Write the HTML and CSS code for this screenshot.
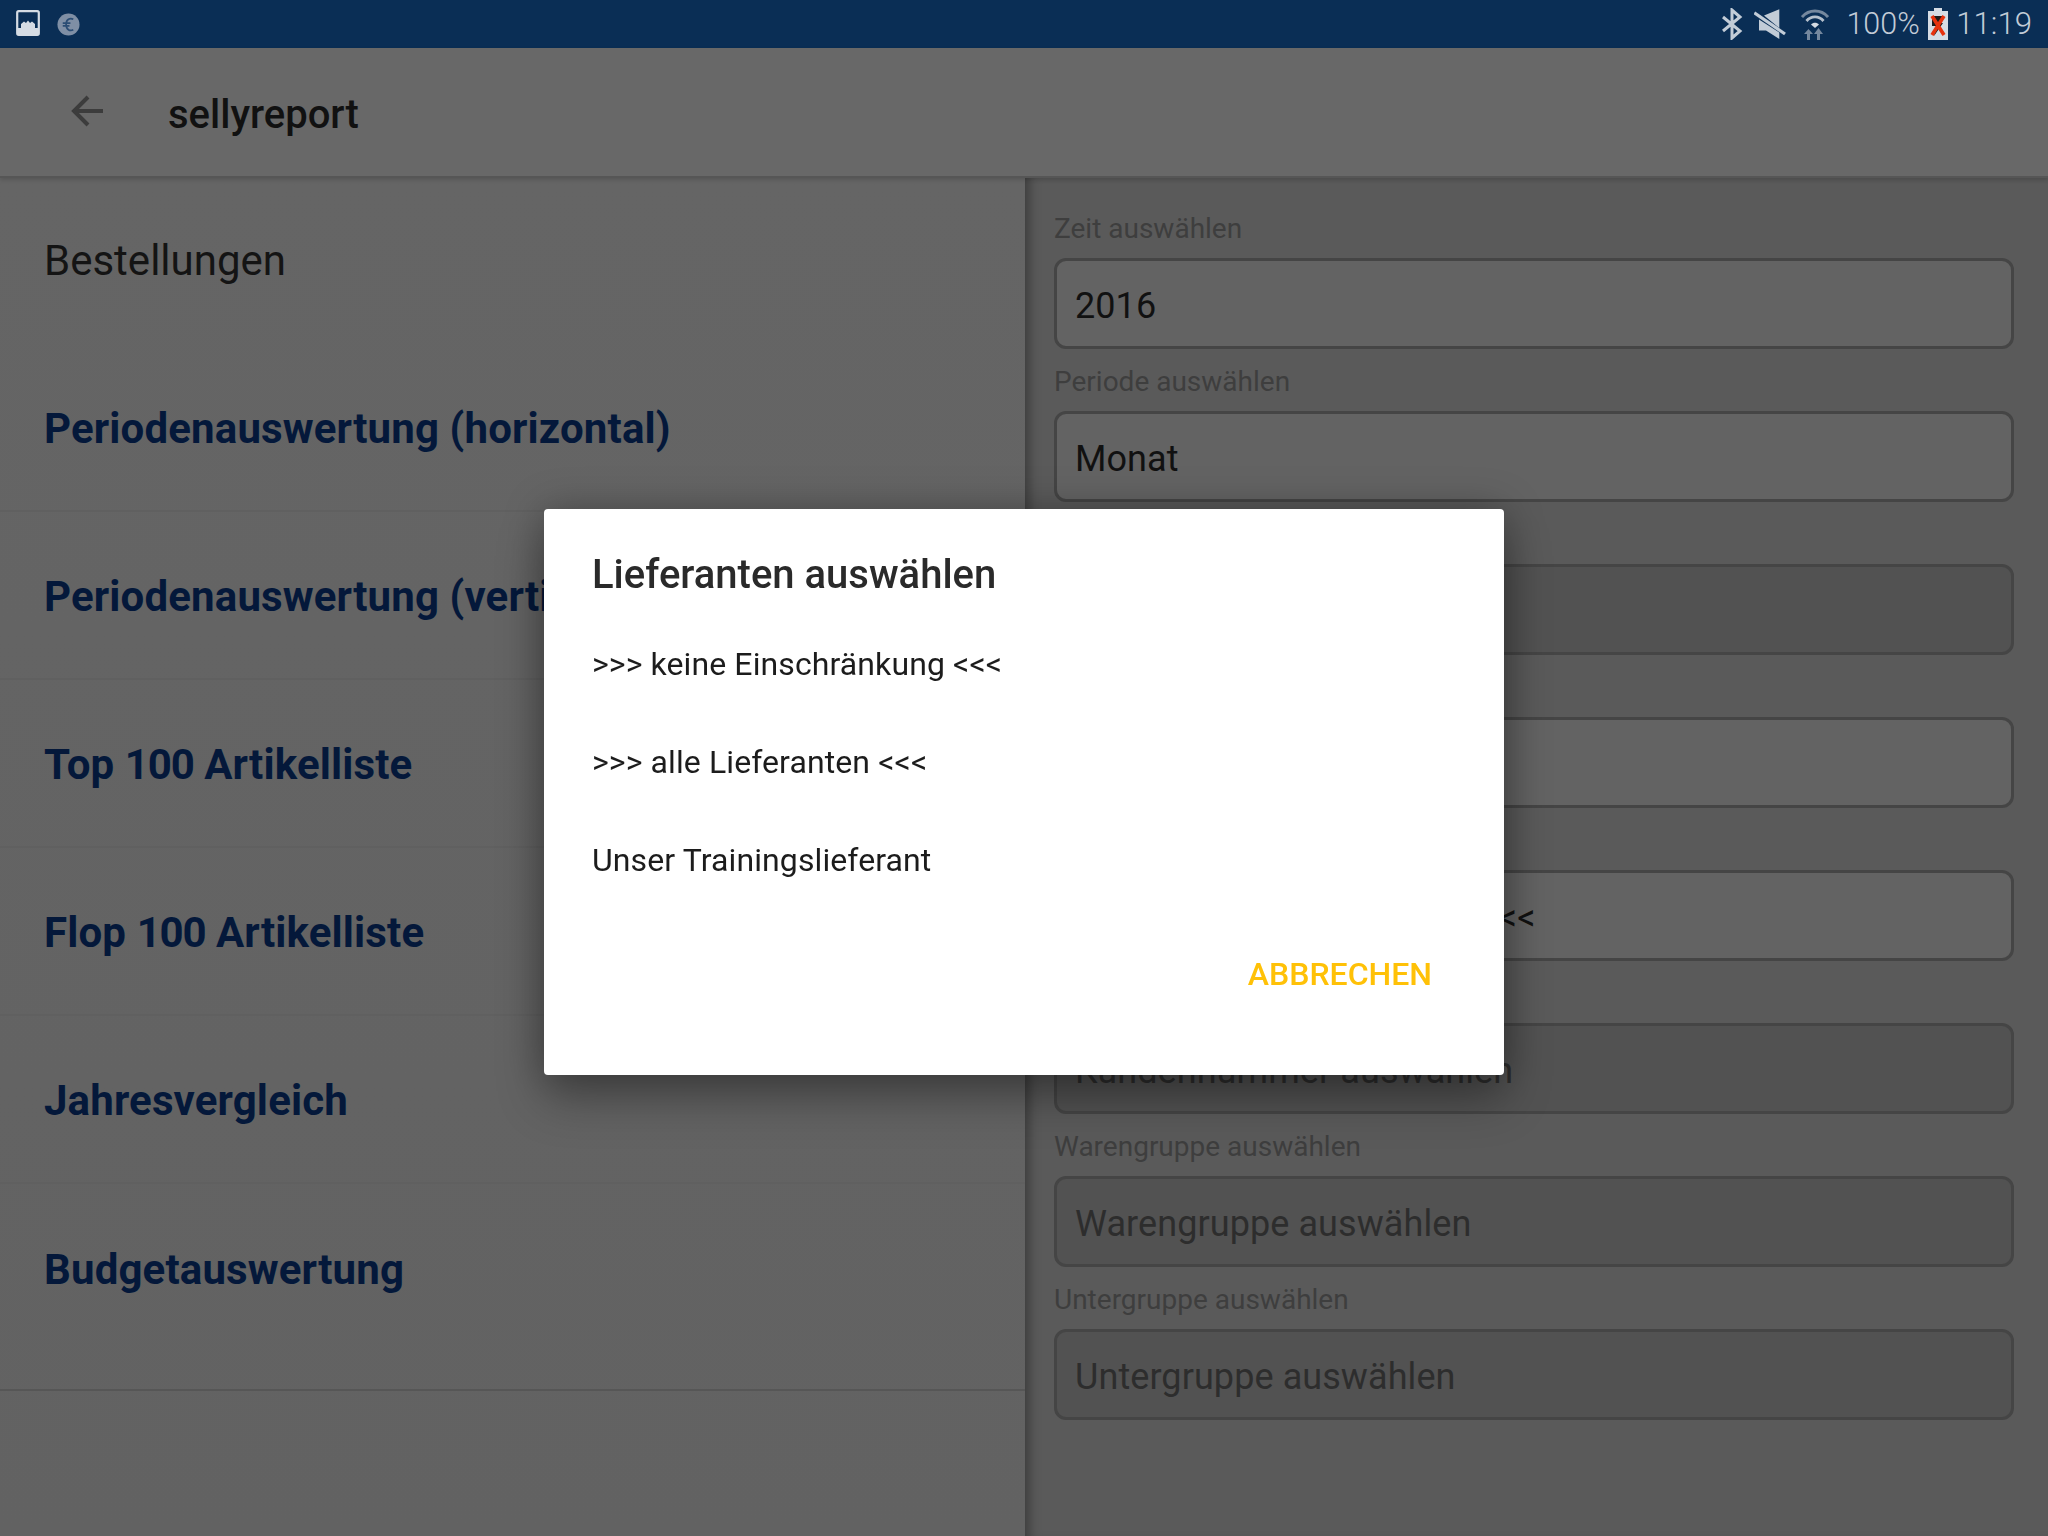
FILE: index.html
```html
<!DOCTYPE html>
<html lang="de">
<head>
<meta charset="utf-8">
<title>sellyreport</title>
<link rel="stylesheet" href="styles.css">
</head>
<body>
<div class="statusbar">
  <div class="status-left">
    <svg class="ic-image" viewBox="0 0 24 26"><rect x="1.200" y="1.200" width="21.600" height="23.600" rx="1.500" fill="#0a2e55" stroke="#d5dce4" stroke-width="2.200"/><path d="M5 18v-4l3-2.500 2 1.500 2-2.500 2 2.500 2-1.500 3 2.500v4z" fill="#d5dce4"/><rect x="1" y="18" width="22" height="7" fill="#d5dce4"/></svg>
    <svg class="ic-euro" viewBox="0 0 24 24"><circle cx="12" cy="12" r="11.500" fill="#7f8fa5"/><path d="M17 6.500c-3.500-1.800-7.500 0-7.500 5.500s4 7.300 7.500 5.500M6 10.500h8M6 13.500h7" fill="none" stroke="#2b4d74" stroke-width="1.800"/></svg>
  </div>
  <div class="status-right">
    <svg class="ic-bt" viewBox="0 0 22 32"><path d="M2 9l17 14-8 7V2l8 7L2 23" fill="none" stroke="#c2ccd7" stroke-width="3"/></svg>
    <svg class="ic-mute" viewBox="0 0 32 30"><path d="M25.300.3V19L10 6.500zM5 10.500v11h7L25.300 30v-6.500z" fill="#c2ccd7"/><path d="M.3 3.700L31 25" stroke="#c2ccd7" stroke-width="3.200"/></svg>
    <svg class="ic-wifi" viewBox="0 0 28 32"><path d="M1 9C8 1 20 1 27 9" fill="none" stroke="#75889e" stroke-width="2.800"/><path d="M5.500 13C10 7.500 18 7.500 22.500 13" fill="none" stroke="#b5c0cc" stroke-width="2.800"/><path d="M10 16.500c2.200-2.500 5.800-2.500 8 0l-4 3.500z" fill="#d5dce4"/><path d="M6 32v-6H3l4.500-5 4.500 5H9v6zM16 32v-6h-3l4.500-6 4.500 6h-3v6z" fill="#75889e"/></svg>
    <span class="status-text pct">100%</span>
    <svg class="ic-batt" viewBox="0 0 20 32"><path d="M6 0h8v3h6v29H0V3h6z" fill="#d5dce4"/><path d="M4 8h12l-4 7h3L6 28l2-10H4z" fill="#1b1b1b"/><path d="M4 8l12 19M16 8L4 27" stroke="#e6320e" stroke-width="3.600"/></svg>
    <span class="status-text time">11:19</span>
  </div>
</div>

<header class="toolbar">
  <svg class="ic-back" viewBox="0 0 32 32"><path d="M32 16H3M17 2L3 16l14 14" fill="none" stroke="#3c3c3c" stroke-width="4"/></svg>
  <span class="app-title">sellyreport</span>
</header>

<main class="content">
  <section class="left">
    <h1 class="section-title">Bestellungen</h1>
    <ul class="report-list">
      <li class="report"><span>Periodenauswertung (horizontal)</span></li>
      <li class="report"><span>Periodenauswertung (vertikal)</span></li>
      <li class="report"><span>Top <span class="num">100</span> Artikelliste</span></li>
      <li class="report"><span>Flop <span class="num">100</span> Artikelliste</span></li>
      <li class="report"><span>Jahresvergleich</span></li>
      <li class="report"><span>Budgetauswertung</span></li>
    </ul>
  </section>
  <section class="right">
    <div class="group"><div class="lbl">Zeit auswählen</div><div class="field filled">2016</div></div>
    <div class="group"><div class="lbl">Periode auswählen</div><div class="field filled">Monat</div></div>
    <div class="group"><div class="lbl"></div><div class="field empty"></div></div>
    <div class="group"><div class="lbl"></div><div class="field filled"></div></div>
    <div class="group"><div class="lbl"></div><div class="field filled">&gt;&gt;&gt; keine Einschränkung &lt;&lt;&lt;</div></div>
    <div class="group"><div class="lbl"></div><div class="field empty">Kundennummer auswählen</div></div>
    <div class="group"><div class="lbl">Warengruppe auswählen</div><div class="field empty">Warengruppe auswählen</div></div>
    <div class="group"><div class="lbl">Untergruppe auswählen</div><div class="field empty">Untergruppe auswählen</div></div>
  </section>
</main>

<div class="overlay">
  <div class="dialog">
    <h2 class="dialog-title">Lieferanten auswählen</h2>
    <ul class="options">
      <li class="option">&gt;&gt;&gt; keine Einschränkung &lt;&lt;&lt;</li>
      <li class="option">&gt;&gt;&gt; alle Lieferanten &lt;&lt;&lt;</li>
      <li class="option">Unser Trainingslieferant</li>
    </ul>
    <div class="actions"><span class="cancel">ABBRECHEN</span></div>
  </div>
</div>
</body>
</html>
```

FILE: styles.css
```css
* { box-sizing: border-box; }
html, body { margin: 0; padding: 0; }
body {
  width: 2048px;
  height: 1536px;
  overflow: hidden;
  background: #666;
  font-family: Roboto, "Liberation Sans", sans-serif;
  display: flex;
  flex-direction: column;
}
ul { list-style: none; margin: 0; padding: 0; }
h1, h2 { margin: 0; }

.statusbar {
  height: 48px;
  flex: none;
  background: #0a2e55;
  display: flex;
  justify-content: space-between;
  align-items: center;
  color: #c2ccd7;
}
.status-left { display: flex; align-items: center; padding-left: 16px; }
.status-right { display: flex; align-items: center; padding-right: 16px; }
.ic-image { width: 24px; height: 26px; display: block; margin: -2px 17px 0 0; }
.ic-euro { width: 23px; height: 23px; display: block; }
.ic-bt { width: 22px; height: 32px; display: block; margin-right: 11px; }
.ic-mute { width: 32px; height: 30px; display: block; margin-right: 15px; }
.ic-wifi { width: 28px; height: 32px; display: block; margin-right: 17px; }
.ic-batt { width: 20px; height: 32px; display: block; margin: 0 8.500px 0 8px; }
.status-text { font-size: 30.500px; font-weight: 300; line-height: 48px; white-space: nowrap; }
.time { font-size: 31.200px; }

.toolbar {
  height: 130px;
  flex: none;
  background: #686868;
  border-bottom: 2px solid #565656;
  display: flex;
  align-items: center;
  padding: 0 0 0 71px;
  position: relative;
  z-index: 2;
  box-shadow: 0 2px 4px rgba(0, 0, 0, .15);
}
.ic-back { width: 32px; height: 32px; display: block; margin: -3px 65px 0 0; }
.app-title { font-size: 40px; font-weight: 500; color: #111; line-height: 48px; padding-top: 6px; }

.content { flex: 1; display: flex; min-height: 0; }

.left {
  width: 1025px;
  flex: none;
  background: linear-gradient(#656565, #626262);
}
.section-title {
  font-size: 42px;
  font-weight: 400;
  color: #141414;
  line-height: 60px;
  padding: 53px 0 53px 44px;
}
.report-list { border-bottom: 2px solid #565656; padding-bottom: 37px; }
.report {
  height: 168px;
  padding: 2px 0 0 44px;
  display: flex;
  align-items: center;
  font-size: 42px;
  font-weight: 700;
  letter-spacing: .15px;
  color: #04183a;
  border-bottom: 2px solid #606060;
}
.report:last-child { border-bottom: 0; }
.num { letter-spacing: -1.200px; }

.right {
  flex: 1;
  background: #5a5a5a;
  padding: 18px 34px 0 29px;
  box-shadow: inset 12px 0 12px -8px rgba(0, 0, 0, .35);
}
.lbl {
  height: 62px;
  line-height: 66px;
  font-size: 28px;
  color: #3e3e3e;
}
.field {
  height: 91px;
  border: 3px solid #454545;
  border-radius: 12px;
  padding: 0 18px;
  font-size: 36px;
  letter-spacing: .08px;
  line-height: 91px;
  white-space: nowrap;
  overflow: hidden;
}
.filled { background: #636363; color: #111; }
.empty { background: #525252; color: #2d2d2d; }

.overlay {
  position: fixed;
  left: 0;
  right: 0;
  top: 48px;
  bottom: 0;
  z-index: 5;
  display: flex;
  align-items: center;
  justify-content: center;
}
.dialog {
  width: 960px;
  height: 566px;
  background: #fff;
  border-radius: 4px;
  padding: 37px 72px 0 48px;
  box-shadow: 0 24px 48px rgba(0, 0, 0, .3), 0 0 40px rgba(0, 0, 0, .25);
}
.dialog-title {
  font-size: 40px;
  font-weight: 500;
  color: #2a2a2a;
  line-height: 58px;
}
.options { margin-top: 11px; }
.option {
  height: 98px;
  font-size: 32px;
  letter-spacing: .1px;
  color: #1c1c1c;
  line-height: 98px;
}
.actions { display: flex; justify-content: flex-end; margin-top: 40px; }
.cancel { font-size: 32px; font-weight: 500; color: #ffc107; line-height: 50px; }
```
